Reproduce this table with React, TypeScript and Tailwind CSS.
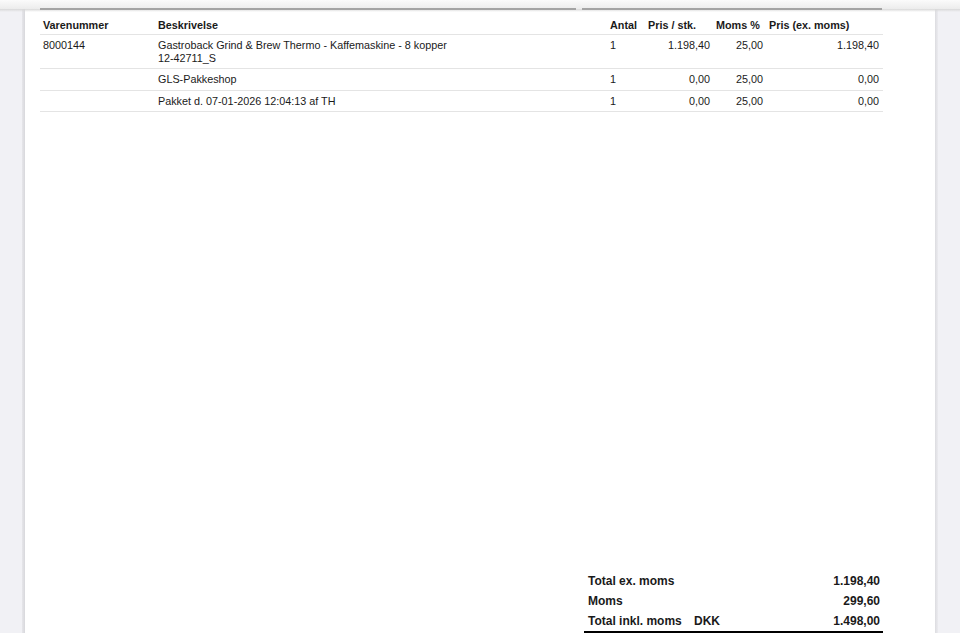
import React from "react";

const font = { fontFamily: '"Liberation Sans", Arial, Helvetica, sans-serif' };

type Row = { nr: string; desc: string[]; antal: string; pris: string; moms: string; total: string };

const rows: Row[] = [
  { nr: "8000144", desc: ["Gastroback Grind & Brew Thermo - Kaffemaskine - 8 kopper", "12-42711_S"], antal: "1", pris: "1.198,40", moms: "25,00", total: "1.198,40" },
  { nr: "", desc: ["GLS-Pakkeshop"], antal: "1", pris: "0,00", moms: "25,00", total: "0,00" },
  { nr: "", desc: ["Pakket d. 07-01-2026 12:04:13 af TH"], antal: "1", pris: "0,00", moms: "25,00", total: "0,00" },
];

export default function App() {
  return (
    <div className="relative flex h-[633px] w-[960px] overflow-hidden bg-[#f1f1f5] text-[#1a1a1a]" style={font}>
      {/* left strip */}
      <div className="w-[22px] shrink-0 bg-[#f1f1f5]" />
      <div className="w-[3px] shrink-0 bg-gradient-to-r from-[#e6e6ea] to-[#d8d8dc]" />
      {/* page */}
      <div className="flex w-[910px] shrink-0 flex-col bg-white pl-[15px] pr-[52px]">
        <div className="h-[15px] shrink-0" />
        {/* table */}
        <div className="text-[10.8px] leading-[12.5px]">
          <div className="flex h-[20px] items-center border-b border-[#e4e4e4] pt-[1px] font-bold">
            <div className="w-[115px] px-[3px]">Varenummer</div>
            <div className="w-[452px] px-[3px]">Beskrivelse</div>
            <div className="w-[38px] px-[3px]">Antal</div>
            <div className="w-[68px] px-[3px]">Pris / stk.</div>
            <div className="w-[53px] px-[3px]">Moms %</div>
            <div className="w-[116px] px-[3px]">Pris (ex. moms)</div>
          </div>
          {rows.map((r, i) => (
            <div key={i} className="flex border-b border-[#e4e4e4] pb-[4px] pt-[4px]">
              <div className="w-[115px] px-[3px]">{r.nr}</div>
              <div className="w-[452px] px-[3px]">
                {r.desc.map((d, j) => (
                  <div key={j}>{d}</div>
                ))}
              </div>
              <div className="w-[38px] px-[3px]">{r.antal}</div>
              <div className="w-[68px] px-[3px] text-right">{r.pris}</div>
              <div className="w-[53px] px-[3px] text-right">{r.moms}</div>
              <div className="w-[116px] px-[3px] text-right">{r.total}</div>
            </div>
          ))}
        </div>
        <div className="flex-1" />
        {/* totals */}
        <div className="ml-auto w-[299px] border-b-2 border-black pt-[1px] text-[12px] font-bold leading-[14px]">
          <div className="flex h-[20px] items-center pl-[4px] pr-[3px]">
            <div className="flex-1">Total ex. moms</div>
            <div>1.198,40</div>
          </div>
          <div className="flex h-[20px] items-center pl-[4px] pr-[3px]">
            <div className="flex-1">Moms</div>
            <div>299,60</div>
          </div>
          <div className="flex h-[20px] items-center pl-[4px] pr-[3px]">
            <div className="w-[106px]">Total inkl. moms</div>
            <div className="flex-1">DKK</div>
            <div>1.498,00</div>
          </div>
        </div>
      </div>
      {/* right strip */}
      <div className="w-[3px] shrink-0 bg-gradient-to-r from-[#dcdce0] to-[#ebebef]" />
      <div className="flex-1 bg-[#f1f1f5]" />

      {/* top shadow edge */}
      <div className="absolute left-0 top-0 h-[9px] w-full bg-gradient-to-b from-[#fbfbfb] to-[#ececec]" />
      <div className="absolute left-0 top-[9px] h-[3px] w-full bg-gradient-to-b from-[#d8d8d8] to-transparent" />
      <div className="absolute left-[40px] top-[8px] h-[2px] w-[536px] bg-[#a4a4a4]" />
      <div className="absolute left-[582px] top-[8px] h-[2px] w-[300px] bg-[#a4a4a4]" />
    </div>
  );
}
